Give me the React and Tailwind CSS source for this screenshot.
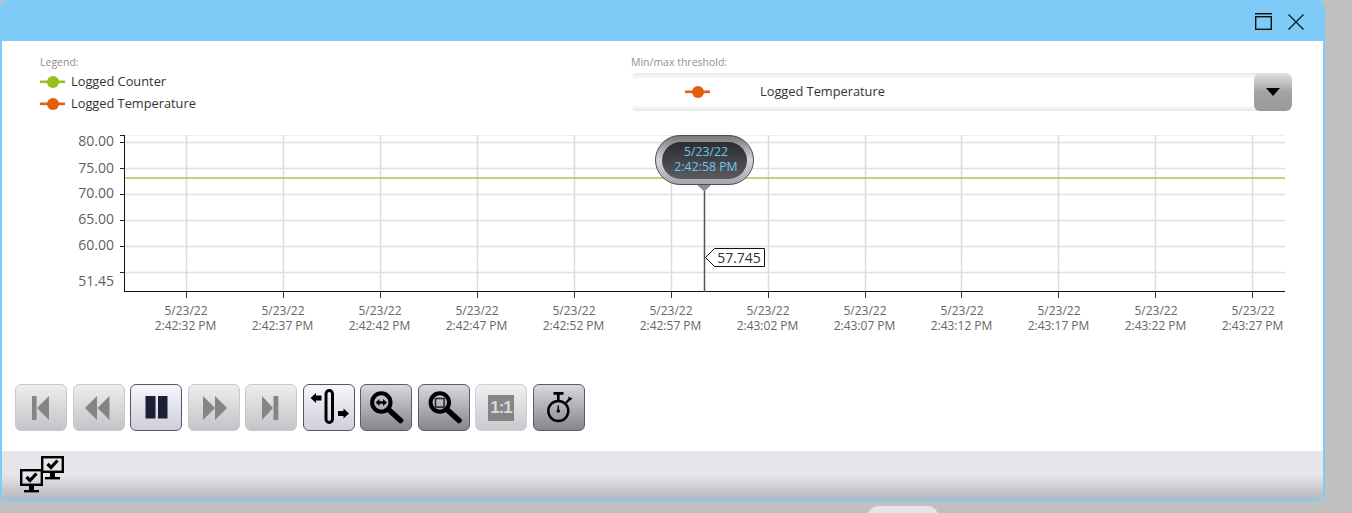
import React from "react";

const font = "font-['Open_Sans','Noto_Sans',sans-serif]";

const gridX = [186, 283, 380, 477, 574, 671, 768, 865, 961, 1058, 1155, 1252];
const timeLabels = [
  "2:42:32 PM", "2:42:37 PM", "2:42:42 PM", "2:42:47 PM", "2:42:52 PM", "2:42:57 PM",
  "2:43:02 PM", "2:43:07 PM", "2:43:12 PM", "2:43:17 PM", "2:43:22 PM", "2:43:27 PM",
];
const gridY = [142, 168, 194, 220, 246, 272];
const yLabels = [
  { y: 146, text: "80.00" },
  { y: 173, text: "75.00" },
  { y: 198, text: "70.00" },
  { y: 224, text: "65.00" },
  { y: 250, text: "60.00" },
  { y: 286, text: "51.45" },
];

const Marker = ({ color }) => (
  <svg width="26" height="14" viewBox="0 0 26 14" className="shrink-0">
    <rect x="0" y="5.5" width="25" height="2.6" fill={color} />
    <circle cx="13" cy="7" r="6" fill={color} />
  </svg>
);

const Chart = () => (
  <svg width="1322" height="220" viewBox="0 0 1322 220" className="block">
    {/* offset: the svg starts at page y=130 */}
    <g transform="translate(-2,-130)">
      <line x1="125" x2="1285" y1="135.5" y2="135.5" stroke="#efefef" />
      {gridY.map((y) => (
        <line key={y} x1="125" x2="1285" y1={y + 0.5} y2={y + 0.5} stroke="#e0e0e0" strokeWidth="1.5" />
      ))}
      {gridX.map((x) => (
        <g key={x}>
          <line x1={x + 0.5} x2={x + 0.5} y1="135" y2="292" stroke="#dcdcdc" strokeWidth="1.5" />
          <line x1={x + 0.5} x2={x + 0.5} y1="292" y2="298" stroke="#333" />
        </g>
      ))}
      <line x1="125" x2="1285" y1="178" y2="178" stroke="#a5c95a" strokeWidth="1.5" />
      {[135, ...gridY].map((y) => (
        <line key={y} x1="120" x2="125" y1={y + 0.5} y2={y + 0.5} stroke="#222" />
      ))}
      <line x1="124.5" x2="124.5" y1="135" y2="292" stroke="#111" />
      <line x1="124" x2="1285" y1="291.5" y2="291.5" stroke="#111" />
      {yLabels.map((l) => (
        <text key={l.text} x="114" y={l.y} textAnchor="end" fontSize="14" fill="#5f5f5f" fontFamily="Open Sans">
          {l.text}
        </text>
      ))}
      {timeLabels.map((t, i) => (
        <g key={t} fontSize="12" fill="#666" fontFamily="Open Sans" textAnchor="middle">
          <text x={186 + 97 * i} y="315">5/23/22</text>
          <text x={185.5 + 97 * i} y="330">{t}</text>
        </g>
      ))}

      {/* cursor */}
      <line x1="704.5" x2="704.5" y1="186" y2="292" stroke="#555" strokeWidth="1.5" />
      <polygon points="697,185 711,185 704.5,191.5" fill="#8c8c90" />
      <defs>
        <linearGradient id="pillOuter" x1="0" y1="0" x2="0" y2="1">
          <stop offset="0" stopColor="#77777c" />
          <stop offset="0.5" stopColor="#d4d5d9" />
          <stop offset="1" stopColor="#a3a4a9" />
        </linearGradient>
        <linearGradient id="pillInner" x1="0" y1="0" x2="0" y2="1">
          <stop offset="0" stopColor="#2b2c30" />
          <stop offset="1" stopColor="#5a5b60" />
        </linearGradient>
      </defs>
      <rect x="655.5" y="135.5" width="98" height="49" rx="24.5" fill="url(#pillOuter)" stroke="#4e4e52" />
      <rect x="662" y="142" width="85" height="37" rx="18.5" fill="url(#pillInner)" />
      <g fontSize="12.3" fill="#6ec6f2" fontFamily="Open Sans" textAnchor="middle">
        <text x="706" y="155.5">5/23/22</text>
        <text x="706" y="170.5">2:42:58 PM</text>
      </g>

      {/* value tag */}
      <polygon points="705.5,257.5 714.5,248.5 764.5,248.5 764.5,266.5 714.5,266.5" fill="#fff" stroke="#111" />
      <text x="739" y="262.5" fontSize="14" fill="#333" fontFamily="Open Sans" textAnchor="middle">57.745</text>
    </g>
  </svg>
);

const variants = {
  off: "border-[#c9c9cc] bg-gradient-to-b from-[#eeeef0] to-[#c4c4c8]",
  faint: "border-[#d0d0d3] bg-gradient-to-b from-[#f0f0f2] to-[#c9c9ce]",
  active: "border-[#55555f] bg-gradient-to-b from-[#f6f6fb] to-[#cfcfdc]",
  on: "border-[#5c5c62] bg-gradient-to-b from-[#d8d8de] to-[#86868c]",
};

const gray = "#858585";
const buttons = [
  {
    v: "off",
    icon: (
      <>
        <rect x="17" y="12" width="4.6" height="24" fill={gray} />
        <polygon points="34,12 34,36 22,24" fill={gray} />
      </>
    ),
  },
  {
    v: "off",
    icon: (
      <>
        <polygon points="24,12 24,36 12,24" fill={gray} />
        <polygon points="36.5,12 36.5,36 24.5,24" fill={gray} />
      </>
    ),
  },
  {
    v: "active",
    icon: (
      <>
        <rect x="15.5" y="12" width="10" height="22.5" fill="#1c2036" />
        <rect x="28" y="12" width="9.5" height="22.5" fill="#1c2036" />
      </>
    ),
  },
  {
    v: "off",
    icon: (
      <>
        <polygon points="15,12 15,36 27,24" fill={gray} />
        <polygon points="27,12 27,36 39,24" fill={gray} />
      </>
    ),
  },
  {
    v: "off",
    icon: (
      <>
        <polygon points="17,12 17,36 28,24" fill={gray} />
        <rect x="28.5" y="12" width="4.8" height="24" fill={gray} />
      </>
    ),
  },
  {
    v: "active",
    icon: (
      <>
        <rect x="23" y="6.5" width="6.5" height="32" rx="3.2" fill="none" stroke="#000" strokeWidth="3" />
        <polygon points="7.5,14 13,9 13,11.5 18.5,11.5 18.5,16.5 13,16.5 13,19" fill="#000" />
        <polygon points="46,29.5 40.5,24.5 40.5,27 35,27 35,32 40.5,32 40.5,34.5" fill="#000" />
      </>
    ),
  },
  {
    v: "on",
    icon: (
      <>
        <circle cx="21.3" cy="18.5" r="9.2" fill="none" stroke="#000" strokeWidth="4" />
        <line x1="29" y1="26" x2="40.5" y2="36.5" stroke="#000" strokeWidth="5.5" strokeLinecap="round" />
        <polygon points="15.5,18.5 19.5,15 19.5,17.3 23,17.3 23,15 27,18.5 23,22 23,19.7 19.5,19.7 19.5,22" fill="#000" />
      </>
    ),
  },
  {
    v: "on",
    icon: (
      <>
        <circle cx="21.8" cy="18.5" r="9.2" fill="none" stroke="#000" strokeWidth="4" />
        <line x1="29.5" y1="26" x2="41" y2="36.5" stroke="#000" strokeWidth="5.5" strokeLinecap="round" />
        <rect x="17.5" y="14.5" width="8.6" height="8.6" fill="none" stroke="#222" strokeWidth="1.5" />
      </>
    ),
  },
  { v: "faint", ratio: true },
  {
    v: "on",
    icon: (
      <>
        <circle cx="25.3" cy="27" r="10" fill="none" stroke="#000" strokeWidth="2.4" />
        <rect x="20.5" y="8" width="10" height="2.8" fill="#000" />
        <rect x="24" y="10" width="2.6" height="6" fill="#000" />
        <line x1="33" y1="19" x2="37" y2="14.5" stroke="#000" strokeWidth="2.2" />
        <polygon points="35,12.5 39.5,14.5 36.5,17" fill="#000" />
        <circle cx="25.3" cy="27" r="1.8" fill="#000" />
        <rect x="24.6" y="21.5" width="1.4" height="5" fill="#000" />
      </>
    ),
  },
];

const ToolButton = ({ v, icon, ratio }) => (
  <button className={`flex h-[47px] w-[52px] items-center justify-center rounded-md border ${variants[v]}`}>
    {ratio ? (
      <span className="flex h-[26px] w-[26px] items-center justify-center bg-[#858585] font-['Liberation_Sans',sans-serif] text-[17px] font-bold leading-none tracking-[-1px] text-[#d8d8d8]">
        1:1
      </span>
    ) : (
      <svg width="52" height="47" viewBox="0 0 52 47" className="shrink-0">
        {icon}
      </svg>
    )}
  </button>
);

const Monitor = ({ x, y }) => (
  <g transform={`translate(${x},${y})`}>
    <rect x="1.2" y="1.2" width="20.6" height="14.6" fill="none" stroke="#000" strokeWidth="2.4" />
    <rect x="9" y="17" width="5" height="4" fill="#000" />
    <rect x="4" y="21" width="15" height="2.4" fill="#000" />
    <path d="M6.5 8 L10 11.5 L16.5 4.5" fill="none" stroke="#000" strokeWidth="3.2" />
  </g>
);

const App = () => (
  <div className={`relative h-[513px] w-[1352px] overflow-hidden bg-[#c0c0c0] ${font}`}>
    <div className="flex h-[501px] w-[1325px] flex-col overflow-hidden rounded-[7px] border-2 border-[#7ecbf7] bg-white">
      <div className="flex h-[39px] shrink-0 items-center justify-end gap-[16px] bg-[#7ecbf7] pr-[19px]">
        <svg width="17" height="17" viewBox="0 0 17 17">
          <rect x="0" y="0" width="17" height="1.5" fill="#111" />
          <rect x="0.7" y="3.7" width="15.6" height="12.6" fill="none" stroke="#111" strokeWidth="1.4" />
        </svg>
        <svg width="16" height="16" viewBox="0 0 16 16">
          <path d="M0.5 0.5 L15.5 15.5 M15.5 0.5 L0.5 15.5" stroke="#111" strokeWidth="1.2" />
        </svg>
      </div>

      <div className="flex h-[410px] shrink-0 flex-col">
        <div className="flex h-[89px] shrink-0 items-start pt-[15px]">
          <div className="ml-[38px] w-[591px]">
            <div className="text-[10.5px] leading-[13px] text-[#8f8f8f]">Legend:</div>
            <div className="mt-[2px] flex h-[22px] items-center gap-[5px] text-[12.8px] text-[#333]">
              <Marker color="#95c11f" />
              Logged Counter
            </div>
            <div className="flex h-[22px] items-center gap-[5px] text-[12.8px] text-[#333]">
              <Marker color="#e65c0f" />
              Logged Temperature
            </div>
          </div>
          <div className="w-[661px]">
            <div className="text-[10.5px] leading-[13px] text-[#8f8f8f]">Min/max threshold:</div>
            <div className="mt-[4px] flex h-[38px] items-center overflow-hidden rounded-md bg-[linear-gradient(to_bottom,#e8e8e8,#ffffff_16%,#ffffff_84%,#e6e6e6)]">
              <span className="ml-[54px]">
                <Marker color="#e65c0f" />
              </span>
              <span className="ml-[49px] flex-1 text-[12.8px] text-[#333]">Logged Temperature</span>
              <span className="flex h-full w-[38px] items-center justify-center rounded-md bg-[linear-gradient(to_bottom,#e0e0e0,#a4a4a4_50%,#9a9a9a)]">
                <svg width="14" height="8" viewBox="0 0 14 8">
                  <polygon points="0,0 14,0 7,8" fill="#000" />
                </svg>
              </span>
            </div>
          </div>
        </div>
        <Chart />
        <div className="mt-[34px] flex gap-[5.5px] pl-[13px]">
          {buttons.map((b, i) => (
            <ToolButton key={i} {...b} />
          ))}
        </div>
      </div>

      <div className="flex flex-1 items-start bg-gradient-to-b from-[#e5e5ea] from-[50%] to-[#b8b8bc] pl-[17px] pt-[4px]">
        <svg width="48" height="40" viewBox="0 0 48 40">
          <Monitor x={22} y={1} />
          <Monitor x={1} y={14} />
        </svg>
      </div>
    </div>
    <div className="absolute left-[868px] top-[506px] h-[10px] w-[70px] rounded-t-[10px] bg-[#e5e5ea]" />
  </div>
);

export default App;
